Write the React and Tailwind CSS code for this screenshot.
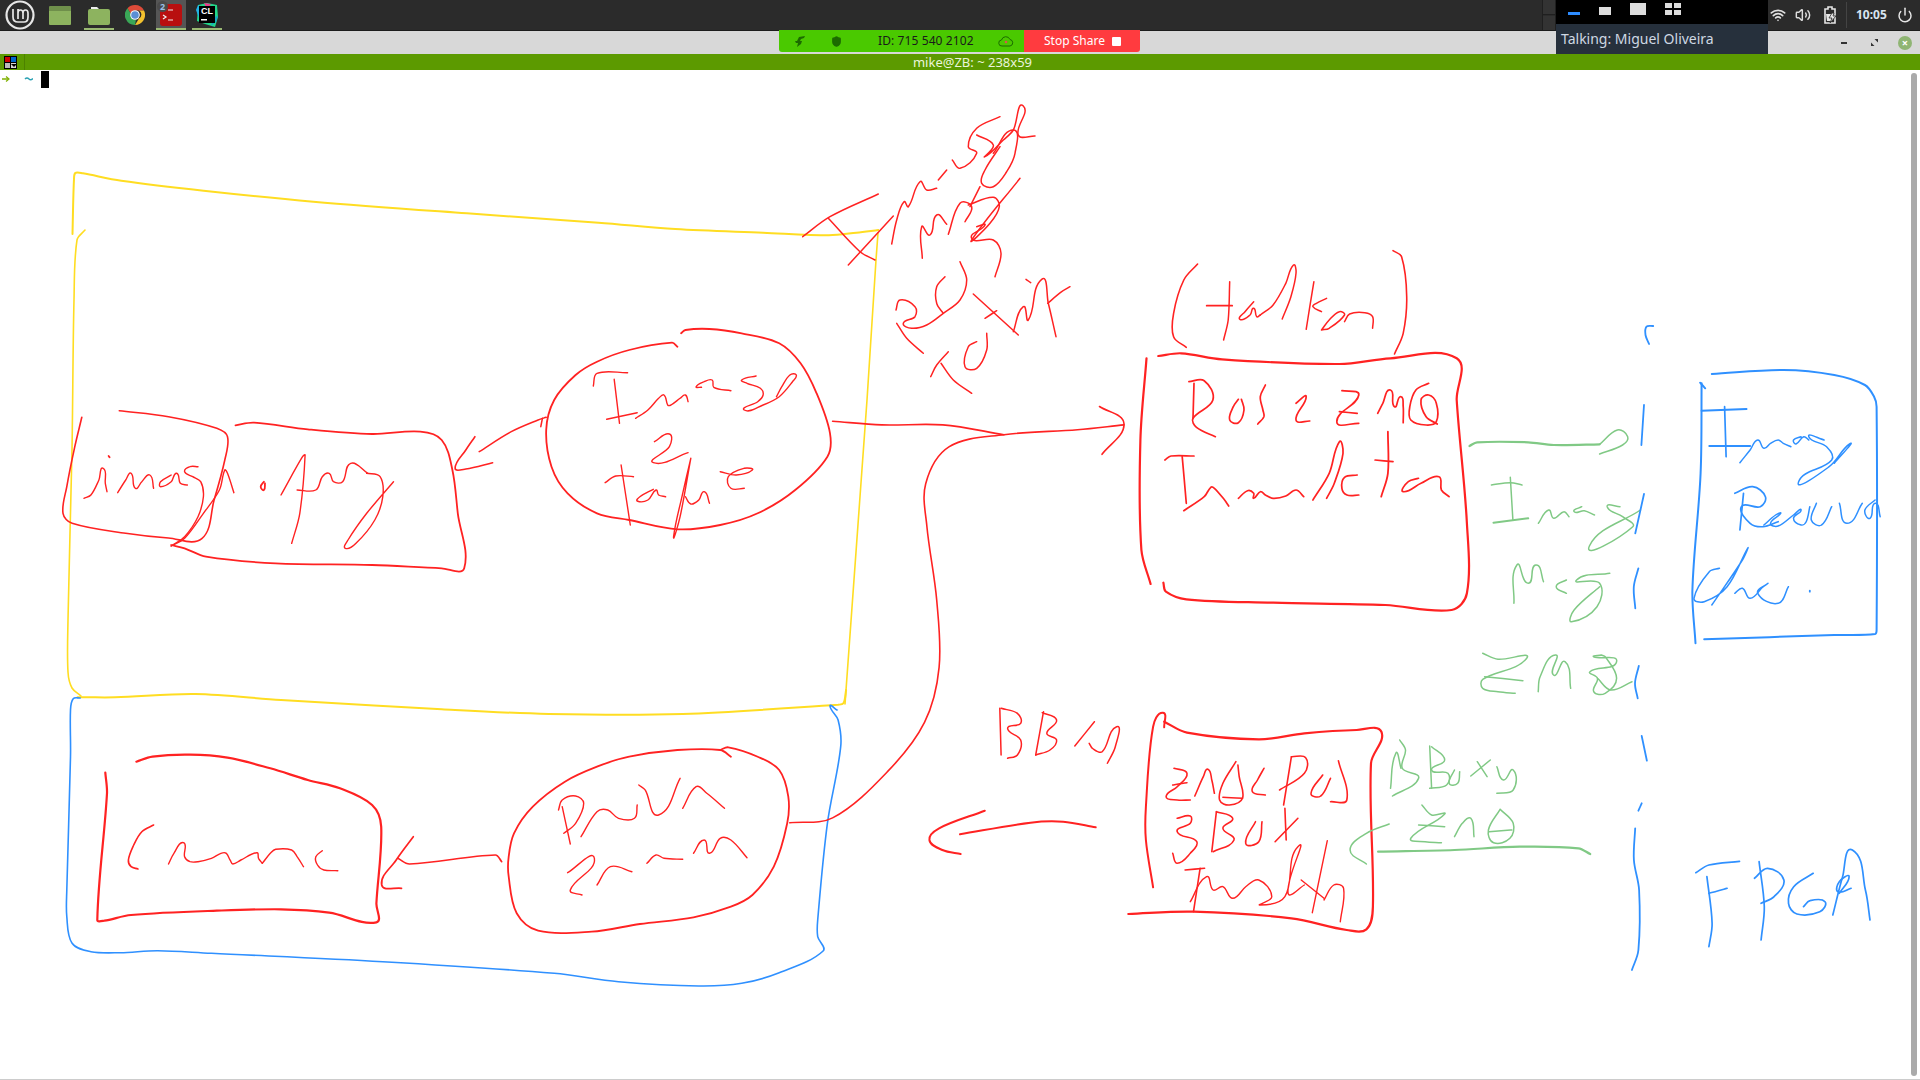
import { Wifi, Volume2, Power, Shield } from 'lucide-react'

const RED = '#ff2222'
const YELLOW = '#ffdd22'
const BLUE = '#2f90ff'
const GREEN = '#80c985'

// crop frames the sketch was measured in: [left, top, x scale, y scale]
const PAGE = [0, 0, 1, 1]
const SHRUNK = [0, 0, 0.8167, 0.8167]
const TOP = [50, 160, 1.823, 3]
const LEFT = [40, 300, 1.867, 3]
const BURST = [780, 90, 3, 3]
const RIGHT = [1120, 240, 1.96, 3]
const BOTTOM = [40, 690, 1.867, 3]
const LOWER = [900, 690, 1.533, 3]
const ZMQ = [1100, 620, 2.613, 3]

const strokes = [
  // yellow box
  [YELLOW, 2, TOP, '41,222 44,50 47,38 60,40 130,62 280,92 480,125 760,160 1000,188 1140,207 1300,218 1420,226 1470,218 1510,210'],
  [YELLOW, 1.6, PAGE, '878,233 876,260 867,400 845,704'],
  [YELLOW, 1.6, PAGE, '85,230 77,240 74,300 72,450 68,620 68,672 72,688 81,696'],
  [YELLOW, 2, BOTTOM, '70,22 85,22 140,22 290,12 450,30 750,58 950,72 1200,72 1490,44 1500,40 1505,0'],

  // blue box
  [BLUE, 1.6, BOTTOM, '75,24 62,26 57,60 57,200 50,600 50,680 60,760 95,785 150,788 220,782 320,790 640,815 960,850 1080,875 1230,888 1310,880 1380,848 1462,783 1452,740 1452,690 1470,400 1495,170 1490,90 1475,48 1488,60'],

  // image.png
  [RED, 1.6, LEFT, '148,332 240,350 330,385 350,410 345,480 325,600 302,716 240,714 160,700 60,670 43,640 50,560 65,440 78,352'],
  [RED, 1.8, LEFT, '365,376 400,368 500,388 620,402 710,395 750,420 770,510 780,640 792,805 750,805 620,795 440,790 310,770 270,745 245,735'],
  [RED, 1.4, LEFT, '82,595 95,585 110,540 118,505 122,550 125,575'],
  [RED, 1.8, LEFT, '128,468 130,472'],
  [RED, 1.4, LEFT, '145,578 160,540 170,520 178,565 190,545 205,525 212,565'],
  [RED, 1.4, LEFT, '245,525 225,545 225,560 245,545 255,520 262,550 275,555'],
  [RED, 1.4, LEFT, '295,500 280,500 270,515 285,530 300,545 305,590 295,650 270,710 245,738'],
  [RED, 1.4, LEFT, '245,738 270,715 305,640 335,570 345,510 350,520 362,578'],
  [RED, 1.8, LEFT, '418,545 412,560 418,570 420,550'],
  [RED, 1.4, LEFT, '450,585 490,470 495,465 485,640 470,730'],
  [RED, 1.4, LEFT, '480,570 515,570 527,530 540,520 548,545 565,545 580,490 612,520'],
  [RED, 1.4, LEFT, '660,545 610,640 575,720 570,745 590,730 625,660 640,590 635,530 610,520'],
  [RED, 1.5, LEFT, '945,352 930,360 880,395 820,455'],
  [RED, 1.5, LEFT, '935,380 938,355'],
  [RED, 1.6, LEFT, '812,410 795,450 775,505 795,507 845,488'],

  // Image 2 Topic
  [RED, 1.8, LEFT, '1190,140 1180,128 1100,150 1040,185 1000,225 960,300 945,390 955,500 985,580 1040,640 1100,660 1190,688 1270,675 1340,640 1410,570 1470,470 1475,400 1450,280 1420,190 1380,130 1310,100 1250,87 1205,90 1197,100'],
  [RED, 1.4, LEFT, '1033,258 1040,220 1097,218'],
  [RED, 1.4, LEFT, '1072,238 1082,370'],
  [RED, 1.4, LEFT, '1058,358 1115,338'],
  [RED, 1.4, LEFT, '1112,355 1135,330 1155,295 1165,285 1172,315 1178,315 1195,295 1205,285 1210,305'],
  [RED, 1.4, LEFT, '1235,262 1225,260 1240,245 1255,240 1258,262 1290,272'],
  [RED, 1.4, LEFT, '1337,228 1310,240 1320,250 1345,265 1350,285 1340,305 1315,330 1350,315 1380,290 1405,245 1412,225 1400,225 1385,260 1375,290'],
  [RED, 1.4, LEFT, '1147,425 1175,402 1175,440 1145,488 1210,458'],
  [RED, 1.4, LEFT, '1055,548 1075,528 1108,530'],
  [RED, 1.4, LEFT, '1085,495 1102,675'],
  [RED, 1.4, LEFT, '1145,568 1120,590 1115,603 1135,600 1150,570 1155,585 1168,590'],
  [RED, 1.4, LEFT, '1215,475 1200,580 1183,710 1195,650 1215,475'],
  [RED, 1.4, LEFT, '1205,590 1215,612 1230,600 1240,575 1250,610'],
  [RED, 1.4, LEFT, '1270,515 1300,525 1330,510 1315,505 1285,530 1290,565 1315,565'],

  // crossed out scribble
  [RED, 1.5, BURST, '68,440 150,380 295,312'],
  [RED, 1.5, BURST, '145,385 240,485 285,510'],
  [RED, 1.5, BURST, '205,525 340,378'],
  [RED, 1.5, BURST, '335,462 350,390 372,335 385,350 420,275 440,300 470,295'],
  [RED, 1.5, BURST, '475,270 500,240'],
  [RED, 1.5, BURST, '517,210 540,235 590,190 565,170 590,115 660,80'],
  [RED, 1.5, BURST, '590,135 640,165 615,200 670,150 700,120 730,48 715,135 765,138'],
  [RED, 1.5, BURST, '640,190 700,120 705,190 680,245 640,290 605,280 615,240 660,170'],
  [RED, 1.5, BURST, '427,505 425,410 450,435 470,375 500,403'],
  [RED, 1.5, BURST, '505,433 540,340 575,350 555,395'],
  [RED, 1.5, BURST, '570,350 600,290'],
  [RED, 1.5, BURST, '565,345 640,322 658,350 630,400 575,450 720,265'],
  [RED, 1.5, BURST, '590,410 615,405 575,445 640,450 663,490 645,560'],
  [RED, 1.5, BURST, '348,660 360,630 405,650 405,680 370,700 395,715 440,705 490,670 540,630 560,570 540,515'],
  [RED, 1.5, BURST, '490,670 470,640 470,590 495,560'],
  [RED, 1.5, BURST, '350,700 380,745 430,790'],
  [RED, 1.5, BURST, '580,612 715,735'],
  [RED, 1.5, BURST, '615,685 650,662'],
  [RED, 1.5, BURST, '700,725 730,650 745,690 785,568 805,640 828,740'],
  [RED, 1.5, BURST, '738,568 752,578'],
  [RED, 1.5, BURST, '803,640 845,605 870,590'],
  [RED, 1.5, BURST, '452,860 470,825 505,785'],
  [RED, 1.5, BURST, '483,820 520,870 575,910'],
  [RED, 1.5, BURST, '620,730 620,780 590,835 555,830 565,770 590,755'],

  // long link to ROS2ZMQ
  [RED, 1.6, SHRUNK, '680,344 720,347 770,347 820,355'],
  [RED, 1.6, SHRUNK, '645,672 680,668 725,630 755,590 767,545 765,490 757,430 756,395 775,365 820,355 880,351 918,347'],
  [RED, 1.6, SHRUNK, '898,332 918,346 900,371'],

  // (talker)
  [RED, 1.6, RIGHT, '152,72 125,120 105,220 105,290 130,322'],
  [RED, 1.5, RIGHT, '215,125 212,240 203,300'],
  [RED, 1.8, RIGHT, '170,197 220,197'],
  [RED, 1.5, RIGHT, '262,185 245,215 235,238 255,225 262,205 268,230 275,225'],
  [RED, 1.5, RIGHT, '275,225 300,195 325,130 340,75 345,100 335,170 318,237'],
  [RED, 1.5, RIGHT, '380,125 372,200 365,268'],
  [RED, 1.5, RIGHT, '405,175 385,190 378,200 395,215'],
  [RED, 1.5, RIGHT, '395,270 410,265 440,225 430,215 410,240 395,270'],
  [RED, 1.5, RIGHT, '440,245 450,222 480,218 495,230 495,265'],
  [RED, 1.6, RIGHT, '535,32 552,50 562,170 555,280 538,342'],

  // ROS2ZMQ Translator
  [RED, 2.2, RIGHT, '75,348 120,340 200,358 430,372 530,355 660,355 660,480 680,850 680,1060 650,1110 520,1095 300,1088 130,1078 90,1055 85,1028'],
  [RED, 2.2, RIGHT, '52,355 40,600 42,930 60,1032'],
  [RED, 1.7, RIGHT, '135,425 165,422 182,480 143,535 150,562 187,590'],
  [RED, 1.7, RIGHT, '145,430 143,535'],
  [RED, 1.7, RIGHT, '232,478 222,500 215,540 232,548 243,510 238,478'],
  [RED, 1.7, RIGHT, '285,435 275,470 280,510 282,530 270,552'],
  [RED, 1.7, RIGHT, '345,490 365,470 345,540 372,543'],
  [RED, 1.7, RIGHT, '435,452 468,465 425,545 468,550'],
  [RED, 1.7, RIGHT, '430,515 465,520'],
  [RED, 1.7, RIGHT, '505,520 515,490 530,450 538,500 550,470 555,500 555,548'],
  [RED, 1.7, RIGHT, '605,430 580,450 568,500 570,540 600,555 620,545 620,490 605,465 590,480 600,530 622,552'],
  [RED, 1.7, RIGHT, '88,660 100,648 145,648'],
  [RED, 1.7, RIGHT, '122,650 130,790'],
  [RED, 1.7, RIGHT, '125,812 165,770 178,742 185,745 205,780 213,798'],
  [RED, 1.7, RIGHT, '232,775 250,752 262,760 262,775 275,755 285,765 300,775 325,768 345,750 360,770'],
  [RED, 1.7, RIGHT, '378,780 410,700 430,605 437,640 420,730 405,775'],
  [RED, 1.7, RIGHT, '465,705 440,712 435,745 445,765 468,765'],
  [RED, 1.8, RIGHT, '525,575 525,700 512,770'],
  [RED, 1.7, RIGHT, '500,660 535,665'],
  [RED, 1.7, RIGHT, '585,715 565,725 555,755 590,730 625,710 630,750 645,770'],

  // green Image Msg ZMQ
  [GREEN, 2.2, RIGHT, '685,618 700,607 800,607 850,615 940,613'],
  [GREEN, 1.5, RIGHT, '940,613 975,570 995,590 985,615 940,642'],
  [GREEN, 1.5, RIGHT, '728,735 765,728 788,735'],
  [GREEN, 1.5, RIGHT, '765,712 770,840'],
  [GREEN, 2, RIGHT, '732,848 800,835'],
  [GREEN, 1.5, RIGHT, '820,850 840,810 850,835 870,815 880,830'],
  [GREEN, 1.5, RIGHT, '905,800 890,815 910,812 930,825'],
  [GREEN, 1.5, RIGHT, '980,800 955,800 985,830 1005,860 920,918 1020,810'],
  [GREEN, 1.5, RIGHT, '772,1090 778,975 800,1030 815,975 830,1025'],
  [GREEN, 1.5, RIGHT, '875,1020 855,1040 875,1060'],
  [GREEN, 1.5, RIGHT, '960,1000 895,1020 940,1030 935,1100 885,1145 890,1110 940,1040'],
  [GREEN, 1.5, ZMQ, '1000,100 1040,118 1115,115 1000,178 1000,205 1040,215 1085,220'],
  [GREEN, 1.5, ZMQ, '1005,170 1105,182'],
  [GREEN, 1.5, ZMQ, '1145,215 1150,170 1190,105 1185,165 1215,125 1230,205'],
  [GREEN, 1.5, ZMQ, '1310,105 1290,110 1350,125 1280,155 1300,175 1290,215 1320,220 1350,175 1320,110 1310,105'],
  [GREEN, 1.5, ZMQ, '1300,175 1335,210 1390,185'],

  // blue dashed divider
  [BLUE, 1.8, RIGHT, '1045,258 1032,260 1030,285 1037,312'],
  [BLUE, 1.8, RIGHT, '1027,495 1022,615'],
  [BLUE, 1.8, RIGHT, '1027,762 1010,880'],
  [BLUE, 1.8, RIGHT, '1016,985 1007,1040 1010,1105'],
  [BLUE, 1.8, ZMQ, '1408,138 1398,190 1405,235'],
  [BLUE, 1.8, LOWER, '1137,138 1145,212'],
  [BLUE, 1.8, LOWER, '1137,340 1132,362'],
  [BLUE, 1.8, LOWER, '1127,415 1125,510 1133,600 1132,780 1122,840'],

  // Image Receiver class
  [BLUE, 2, RIGHT, '1160,402 1300,390 1400,405 1460,435 1478,470 1483,500 1483,1170 1480,1182 1400,1185 1145,1198'],
  [BLUE, 2, RIGHT, '1137,428 1147,445'],
  [BLUE, 2, RIGHT, '1140,430 1138,700 1122,1050 1128,1210'],
  [BLUE, 2, RIGHT, '1140,512 1228,507'],
  [BLUE, 1.7, RIGHT, '1185,500 1188,650'],
  [BLUE, 2, RIGHT, '1155,618 1235,618'],
  [BLUE, 1.5, RIGHT, '1215,668 1235,630 1250,600 1262,625 1275,610 1290,600 1300,610 1315,620'],
  [BLUE, 1.5, RIGHT, '1335,590 1320,600 1325,612 1340,590 1350,600'],
  [BLUE, 1.5, RIGHT, '1380,600 1350,590 1385,620 1395,660 1330,725 1390,680 1430,612 1400,670'],
  [BLUE, 1.7, RIGHT, '1205,760 1240,740 1265,770 1255,800 1218,800 1235,850 1260,860 1290,845'],
  [BLUE, 1.7, RIGHT, '1222,760 1215,870'],
  [BLUE, 1.5, RIGHT, '1262,855 1285,825 1295,820 1275,850 1290,858 1320,825 1335,810 1320,835 1335,855 1345,845 1352,800'],
  [BLUE, 1.5, RIGHT, '1365,790 1355,840 1375,855 1395,800'],
  [BLUE, 1.5, RIGHT, '1410,790 1425,850 1455,790'],
  [BLUE, 1.5, RIGHT, '1480,780 1460,810 1470,835 1480,790 1490,830'],
  [BLUE, 1.5, RIGHT, '1175,985 1155,995 1125,1075 1145,1085 1190,1040 1230,925 1220,960 1160,1095'],
  [BLUE, 1.5, RIGHT, '1205,1060 1220,1045 1235,1075 1260,1040'],
  [BLUE, 1.5, RIGHT, '1270,1030 1250,1060 1290,1090 1310,1040'],
  [BLUE, 1.8, RIGHT, '1352,1052 1352,1055'],

  // Camera
  [RED, 2.2, BOTTOM, '122,248 125,310 107,690 120,692 170,675 330,662 450,658 540,668 628,697 628,640 637,410 620,345 560,295 500,270 430,235 350,203 280,194 210,200 180,215'],
  [RED, 1.6, BOTTOM, '212,405 190,425 175,465 165,510 170,530 183,537'],
  [RED, 1.4, BOTTOM, '240,522 250,490 268,458 270,500 280,515 295,515 320,505 345,488 355,510 360,522 375,510 405,488 408,505 415,520'],
  [RED, 1.4, BOTTOM, '415,520 430,490 440,478 470,480 480,500 492,530'],
  [RED, 1.4, BOTTOM, '527,482 515,500 518,525 530,540 556,542'],
  [RED, 1.7, BOTTOM, '697,440 665,510 638,585 675,595'],
  [RED, 1.7, BOTTOM, '668,505 690,522 850,495 862,515'],

  // PnP node
  [RED, 1.8, BOTTOM, '1290,200 1270,180 1190,180 1100,200 1040,230 980,275 920,350 885,430 875,500 875,560 890,670 930,722 1030,725 1120,702 1220,682 1290,650 1330,615 1370,530 1395,400 1397,320 1380,240 1340,200 1285,172 1270,180'],
  [RED, 1.4, BOTTOM, '968,360 975,330 1000,318 1015,340 1000,400 978,430'],
  [RED, 1.4, BOTTOM, '975,350 990,462'],
  [RED, 1.4, BOTTOM, '1010,440 1040,365 1060,360 1080,385 1110,385 1115,345'],
  [RED, 1.4, BOTTOM, '1118,285 1130,300 1155,375 1195,265'],
  [RED, 1.4, BOTTOM, '1200,355 1225,290 1245,310 1278,355'],
  [RED, 1.4, BOTTOM, '985,548 1035,505 990,600 1012,615'],
  [RED, 1.4, BOTTOM, '1040,585 1065,530 1105,545'],
  [RED, 1.4, BOTTOM, '1133,520 1150,495 1165,505 1200,508'],
  [RED, 1.4, BOTTOM, '1220,490 1240,450 1250,490 1270,445 1290,450 1320,503'],

  // BBoxs
  [RED, 1.5, LOWER, '153,55 155,195'],
  [RED, 1.5, LOWER, '155,55 180,70 185,100 165,115 185,150 180,195 165,205'],
  [RED, 1.5, LOWER, '220,65 208,195'],
  [RED, 1.5, LOWER, '218,68 240,90 225,130 240,150 230,180 208,195'],
  [RED, 1.5, LOWER, '298,95 268,168'],
  [RED, 1.5, LOWER, '290,160 295,175 310,185 332,110 330,170 318,220'],
  [RED, 2, LOWER, '130,362 60,415 45,450 65,480 93,492'],
  [RED, 2, LOWER, '92,433 200,398 250,395 300,412'],

  // ZMQ2ROS BBOX Translator
  [RED, 2, LOWER, '405,112 403,68 388,110 377,350 377,450 388,592'],
  [RED, 2.2, LOWER, '405,95 440,128 550,148 620,130 700,120 738,125 722,220 725,650 715,718 685,720 600,685 450,665 350,672'],
  [RED, 1.6, LOWER, '420,235 440,250 425,290 408,320 425,330 445,330'],
  [RED, 1.6, LOWER, '418,285 440,278'],
  [RED, 1.6, LOWER, '452,318 465,260 472,238 478,270 482,310'],
  [RED, 1.6, LOWER, '515,215 495,280 490,330 505,345 525,325 520,260 518,225'],
  [RED, 1.6, LOWER, '495,322 525,325'],
  [RED, 1.6, LOWER, '558,235 548,270 540,305 560,315'],
  [RED, 1.6, LOWER, '600,200 622,203 620,250 582,300'],
  [RED, 1.6, LOWER, '600,200 588,345'],
  [RED, 1.6, LOWER, '648,255 630,310 645,318 660,265'],
  [RED, 1.6, LOWER, '672,212 685,330 660,335'],
  [RED, 1.6, LOWER, '425,385 445,378 445,400 425,425 455,455 445,490 425,520 418,490'],
  [RED, 1.6, LOWER, '485,365 478,485'],
  [RED, 1.6, LOWER, '485,365 510,385 495,415 512,450 480,485'],
  [RED, 1.6, LOWER, '545,395 530,460 550,455 555,395'],
  [RED, 1.6, LOWER, '610,385 575,455'],
  [RED, 1.6, LOWER, '590,355 592,450'],
  [RED, 1.6, LOWER, '437,540 467,535'],
  [RED, 1.6, LOWER, '460,535 450,665'],
  [RED, 1.4, LOWER, '445,635 470,560 480,600 495,590 510,625 530,590 550,570 570,620 552,645 590,620 610,470 595,610 620,585'],
  [RED, 1.4, LOWER, '655,452 632,668'],
  [RED, 1.4, LOWER, '615,570 650,625'],
  [RED, 1.4, LOWER, '650,630 665,585 680,595 675,695'],

  // green BBoxs ZMQ
  [GREEN, 1.5, LOWER, '766,150 775,180 770,235 795,265 755,318'],
  [GREEN, 1.5, LOWER, '752,295 760,190 768,235'],
  [GREEN, 1.5, LOWER, '812,168 815,295'],
  [GREEN, 1.5, LOWER, '815,170 835,210 815,240 840,250 838,285 812,295'],
  [GREEN, 1.5, LOWER, '850,240 842,280 855,280 858,245'],
  [GREEN, 1.5, LOWER, '905,210 875,258'],
  [GREEN, 1.5, LOWER, '885,215 900,260'],
  [GREEN, 1.5, LOWER, '915,230 925,270 940,240 940,300 915,310'],
  [GREEN, 1.5, LOWER, '800,345 815,375 835,372 783,445 805,455 830,458'],
  [GREEN, 1.5, LOWER, '795,405 835,410'],
  [GREEN, 1.5, LOWER, '850,440 862,400 875,385 880,440'],
  [GREEN, 1.5, LOWER, '920,358 902,420 910,458 935,445 940,400 920,358'],
  [GREEN, 1.5, LOWER, '903,425 938,420'],
  [GREEN, 1.5, LOWER, '750,402 715,430 690,480 715,522'],
  [GREEN, 2.2, LOWER, '733,485 850,480 950,470 1040,475 1058,492'],

  // FPGA
  [BLUE, 1.7, LOWER, '1220,548 1240,525 1287,514'],
  [BLUE, 1.7, LOWER, '1237,560 1245,700 1240,770'],
  [BLUE, 1.7, LOWER, '1240,610 1268,595'],
  [BLUE, 1.7, LOWER, '1317,515 1325,650 1320,750'],
  [BLUE, 1.7, LOWER, '1310,565 1330,535 1355,570 1340,620 1320,640'],
  [BLUE, 1.7, LOWER, '1400,550 1370,590 1362,640 1375,672 1410,665 1418,635 1395,632 1385,650'],
  [BLUE, 1.7, LOWER, '1430,675 1445,560 1460,480 1480,600 1487,690'],
  [BLUE, 1.7, LOWER, '1440,610 1455,560 1440,575 1438,605 1458,595'],
]

// turn measured points into a smooth pen line, tangents scaled to segment
// length so that uneven point spacing does not overshoot at corners
function penPath(frame, pts) {
  const [ox, oy, sx, sy] = frame
  const p = pts.split(' ').map((s) => {
    const [x, y] = s.split(',').map(Number)
    return [ox + x / sx, oy + y / sy]
  })
  const dir = (a, b) => {
    const dx = b[0] - a[0]
    const dy = b[1] - a[1]
    const len = Math.hypot(dx, dy) || 1
    return [dx / len, dy / len]
  }
  let d = `M${p[0][0].toFixed(1)} ${p[0][1].toFixed(1)}`
  for (let i = 0; i < p.length - 1; i++) {
    const b = p[i]
    const c = p[i + 1]
    const t1 = dir(p[i - 1] || b, c)
    const t2 = dir(b, p[i + 2] || c)
    const l = Math.hypot(c[0] - b[0], c[1] - b[1]) / 3
    d += `C${(b[0] + t1[0] * l).toFixed(1)} ${(b[1] + t1[1] * l).toFixed(1)} ${(c[0] - t2[0] * l).toFixed(1)} ${(c[1] - t2[1] * l).toFixed(1)} ${c[0].toFixed(1)} ${c[1].toFixed(1)}`
  }
  return d
}

function Launcher({ active, highlight, children }) {
  return (
    <div className={`relative w-[30px] h-[30px] flex items-center justify-center ${highlight ? 'bg-[#555555]' : ''}`}>
      {children}
      {active && <div className="absolute bottom-0 left-0 right-0 h-[2px] bg-[#9ab973]" />}
    </div>
  )
}

function FolderFlat() {
  return (
    <div className="w-[22px] h-[19px] rounded-[1px] bg-[#8db35f] border-t-[5px] border-[#6f8f4b]" />
  )
}

function FolderTab() {
  return (
    <svg width="22" height="19" viewBox="0 0 22 19">
      <path d="M3 1h6l2 2H3z" fill="#eeeeee" />
      <rect x="0" y="3" width="22" height="16" rx="2" fill="#8db35f" />
    </svg>
  )
}

function Chrome() {
  return (
    <svg width="20" height="20" viewBox="0 0 20 20">
      <rect width="20" height="20" rx="3" fill="#2b2b2b" />
      <path d="M10 0a10 10 0 0 1 9 5.500H10a4.500 4.500 0 0 0-4.300 3L2.500 3.300A10 10 0 0 1 10 0z" fill="#dd4b39" />
      <path d="M19 5.500A10 10 0 0 1 10 20l4-6.500a4.500 4.500 0 0 0 0-8z" fill="#f2c12e" />
      <path d="M2.500 3.300 5.800 8.700A4.500 4.500 0 0 0 11 14.400L10 20A10 10 0 0 1 2.500 3.300z" fill="#3aa757" />
      <circle cx="10" cy="10" r="4.800" fill="#ffffff" />
      <circle cx="10" cy="10" r="3.800" fill="#5b8fd6" />
    </svg>
  )
}

function Terminal() {
  return (
    <div className="relative">
      <svg width="22" height="22" viewBox="0 0 22 22">
        <rect width="22" height="22" rx="3" fill="#b80f0f" />
        <path d="M3 11l3 2-3 2" stroke="#eeeeee" strokeWidth="1.200" fill="none" />
        <path d="M8 6h5M8 16h5" stroke="#eeeeee" strokeWidth="1.200" />
      </svg>
      <div className="absolute -top-[3px] -left-[3px] w-[11px] h-[11px] rounded-full bg-[#4a4a4a] flex items-center justify-center text-[9px] font-bold text-[#9cc0e8]">
        2
      </div>
    </div>
  )
}

function CLion() {
  return (
    <div className="relative w-[24px] h-[26px]">
      <svg className="absolute inset-0" width="24" height="26" viewBox="0 0 24 26">
        <path d="M3 3 12 1l10 2 1 12-3 10-10-3-8-3z" fill="#21d789" />
        <path d="M9 1l7 1-4 5z" fill="#ee3a8c" />
        <path d="M1 8 3 3l6 4-5 9z" fill="#22b3e6" />
        <path d="M16 24l5-4 2-6-4 1z" fill="#16a2c8" />
        <rect x="4" y="4" width="16" height="17" fill="#000000" />
        <rect x="6" y="17" width="6" height="1.500" fill="#ffffff" />
      </svg>
      <span className="absolute left-[6px] top-[4px] text-[9px] leading-[11px] font-bold text-white font-['Liberation_Sans',sans-serif]">CL</span>
    </div>
  )
}

function MintLogo() {
  return (
    <svg width="30" height="30" viewBox="0 0 30 30">
      <circle cx="15" cy="15" r="13.500" fill="none" stroke="#e6e6e6" strokeWidth="2.200" />
      <path d="M8 9v8c0 3 2 5 5 5h6c3 0 4-2 4-5v-4c0-2-1-3-2.500-3s-2.500 1-2.500 3v6M18 13c0-2-1-3-2.500-3s-2.500 1-2.500 3v6M13 9v9" fill="none" stroke="#e6e6e6" strokeWidth="1.700" />
    </svg>
  )
}

function BatteryIcon() {
  return (
    <svg width="14" height="18" viewBox="0 0 14 18" fill="none">
      <path d="M5 1h4v2h3v14H2V3h3z" stroke="#e6e6e6" strokeWidth="1.600" />
      <path d="M3 8h8v3l-3-1 1 5H4z" fill="#e6e6e6" />
      <path d="M9 7 6 12h3l-2 5 6-7h-3l1-3z" fill="#e6e6e6" stroke="#2b2b2b" strokeWidth="0.800" />
    </svg>
  )
}

function RestoreIcon() {
  return (
    <svg width="7" height="7" viewBox="0 0 7 7">
      <path d="M7 0v3.500L3.500 0zM0 7V3.500L3.500 7z" fill="#333333" />
    </svg>
  )
}

function WindowIcon() {
  return (
    <div className="w-[13px] h-[13px] grid grid-cols-2 grid-rows-2 gap-[1px] bg-black border border-black">
      <div className="bg-[#cc0000]" />
      <div className="bg-[#0066cc]" />
      <div className="bg-[#bbbbbb]" />
      <div className="bg-[#d8d8d8] flex items-center justify-center">
        <div className="w-0 h-0 border-x-[3px] border-t-[3px] border-x-transparent border-t-black" />
      </div>
    </div>
  )
}

function Prompt() {
  return (
    <svg className="ml-[2px] mt-[5px]" width="31" height="8" viewBox="0 0 31 8" fill="none">
      <path d="M0 4h6" stroke="#7fb000" strokeWidth="1.500" />
      <path d="M4 1.500 7 4 4 6.500" stroke="#7fb000" strokeWidth="1.200" />
      <path d="M23 4c1.500-1.500 3-1 4 0s2.500 1 4-.5" stroke="#2aa1b3" strokeWidth="1.500" />
    </svg>
  )
}

export default function App() {
  return (
    <div className="relative w-[1920px] h-[1080px] overflow-hidden flex flex-col bg-white font-['Noto_Sans',sans-serif]">
      {/* mint panel */}
      <div className="h-[31px] bg-[#2b2b2b] border-b border-[#1c1c1c] flex items-center">
        <div className="w-[48px] pl-[5px] flex items-center">
          <MintLogo />
        </div>
        <div className="flex gap-[6px]">
          <Launcher>
            <div className="-ml-[6px]">
              <FolderFlat />
            </div>
          </Launcher>
          <Launcher active>
            <FolderTab />
          </Launcher>
          <Launcher>
            <Chrome />
          </Launcher>
          <Launcher active highlight>
            <Terminal />
          </Launcher>
          <Launcher active>
            <CLion />
          </Launcher>
        </div>
        <div className="ml-auto flex items-center h-full">
          <div className="w-[14px] h-full flex flex-col gap-[1px] border-x border-[#1f1f1f] mr-[212px]">
            <div className="flex-1 bg-[#333333] border-b border-[#1f1f1f]" />
            <div className="flex-1 bg-[#333333]" />
          </div>
          <div className="flex items-center w-[152px] pl-[2px] h-full">
            <Wifi size={16} strokeWidth={2.5} className="text-[#e0e0e0]" />
            <Volume2 size={16} strokeWidth={2.2} className="ml-[9px] text-[#dddddd]" />
            <div className="ml-[12px] flex">
              <BatteryIcon />
            </div>
            <div className="ml-[9px] w-px h-[26px] bg-[#444444]" />
            <span className="ml-[9px] text-[12px] font-bold text-[#d8e4f0]">10:05</span>
            <Power size={16} strokeWidth={2.2} className="ml-[10px] text-[#e6e6e6]" />
          </div>
        </div>
      </div>

      {/* window title bar */}
      <div className="h-[23px] bg-[#d8d8d8] flex items-center justify-end">
        <div className="w-[6px] h-[2px] bg-[#333333]" />
        <div className="ml-[24px]">
          <RestoreIcon />
        </div>
        <div className="ml-[20px] mr-[8px] w-[14px] h-[14px] rounded-full bg-[#8fb573] flex items-center justify-center text-white text-[11px] font-bold leading-none">
          ×
        </div>
      </div>

      {/* terminator group bar */}
      <div className="h-[16px] bg-[#5c9a00] flex items-center">
        <div className="w-[25px] h-full pl-[4px] border-r border-[#4d8200] flex items-center">
          <WindowIcon />
        </div>
        <div className="flex-1 text-center text-[13px] leading-none text-[#eaf5dc]">mike@ZB: ~ 238x59</div>
      </div>

      {/* terminal, with the annotation layer on top */}
      <div className="relative flex-1 border-b border-[#cccccc]">
        <div className="flex items-start">
          <Prompt />
          <div className="ml-[8px] mt-[1px] w-[8px] h-[17px] bg-black" />
        </div>
        <svg className="absolute left-0 top-0" width="1920" height="1010" viewBox="0 70 1920 1010" fill="none">
          {strokes.map(([color, width, frame, pts], i) => (
            <path key={i} d={penPath(frame, pts)} stroke={color} strokeWidth={width} strokeLinecap="round" strokeLinejoin="round" />
          ))}
        </svg>
        <div className="absolute top-[3px] bottom-[3px] left-[1911px] w-[6px] rounded-full bg-[#aaaaaa]" />
      </div>

      {/* zoom meeting bar */}
      <div className="absolute left-[779px] top-[30px] w-[361px] h-[22px] rounded-b-[3px] overflow-hidden flex text-[12px]">
        <div className="w-[245px] bg-[#4ac900] flex items-center text-[#1a1a1a]">
          <svg className="ml-[16px]" width="10" height="11" viewBox="0 0 10 11">
            <path d="M10 0 4 1 2 5H0l1 2h2L2 11l4-3 1-3H5l1-2 3-1z" fill="#1c6b00" />
          </svg>
          <Shield size={11} strokeWidth={3} className="ml-[26px] text-[#1c6b00] fill-[#1c6b00]" />
          <span className="ml-[36px] w-[120px] tracking-[0.1px]">ID: 715 540 2102</span>
          <div className="relative w-[16px] h-[12px]">
            <svg className="absolute inset-0" width="16" height="12" viewBox="0 0 16 12" fill="none">
              <path d="M4 11a3 3 0 0 1-.5-6A4.500 4.500 0 0 1 12 4.500a3.300 3.300 0 0 1 0 6.500z" stroke="#1c6b00" strokeWidth="1" />
              <circle cx="8" cy="7" r="1.300" fill="#d9534f" />
            </svg>
          </div>
        </div>
        <div className="flex-1 bg-[#ff3b3f] flex items-center text-white">
          <span className="ml-[20px]">Stop Share</span>
          <div className="ml-[7px] w-[9px] h-[9px] rounded-[1px] bg-white" />
        </div>
      </div>

      {/* zoom speaker overlay */}
      <div className="absolute left-[1556px] top-0 w-[212px] h-[54px] flex flex-col">
        <div className="h-[24px] bg-black flex items-start">
          <div className="ml-[12px] mt-[12px] w-[12px] h-[3px] bg-[#2d8cff]" />
          <div className="ml-[19px] mt-[7px] w-[12px] h-[8px] bg-[#dddddd]" />
          <div className="ml-[19px] mt-[3px] w-[16px] h-[12px] bg-[#dddddd]" />
          <div className="ml-[19px] mt-[3px] w-[16px] h-[12px] grid grid-cols-2 grid-rows-2 gap-[2px]">
            <div className="bg-[#dddddd]" />
            <div className="bg-[#dddddd]" />
            <div className="bg-[#dddddd]" />
            <div className="bg-[#dddddd]" />
          </div>
        </div>
        <div className="flex-1 bg-[#26303c] flex items-center pl-[5px] pb-[2px] text-[14px] text-[#cfd8e3]">Talking: Miguel Oliveira</div>
      </div>
    </div>
  )
}
